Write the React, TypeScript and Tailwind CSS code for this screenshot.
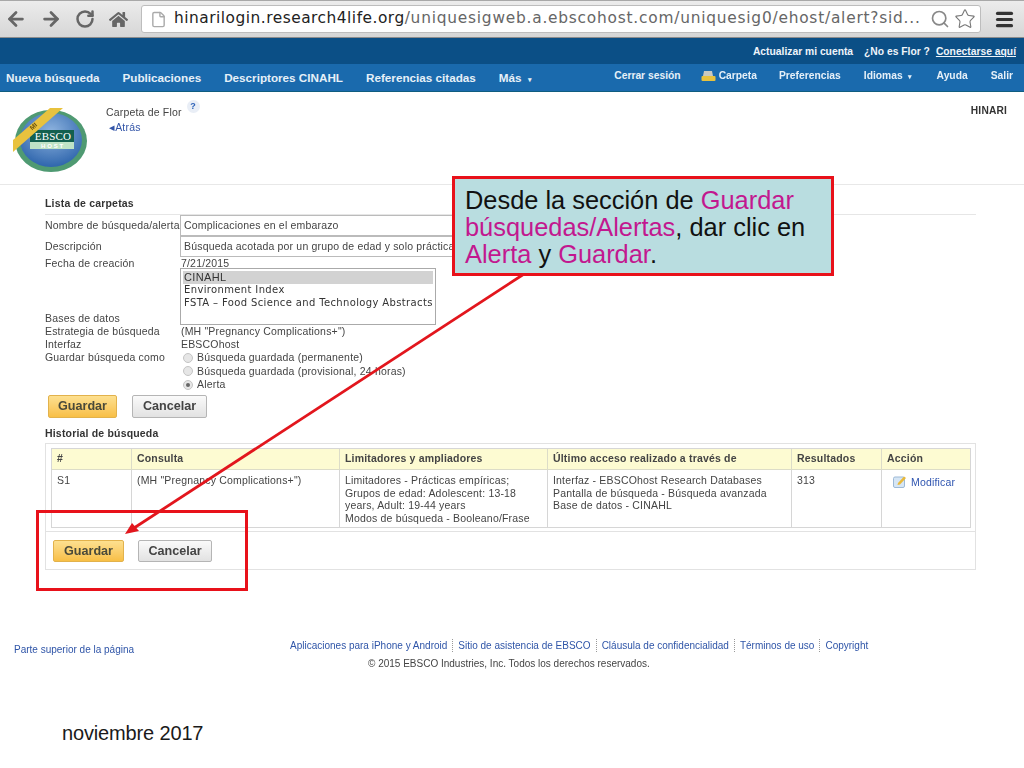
import React from 'react'
import { ArrowLeft, ArrowRight, RotateCw, File, Search, Star, Menu } from 'lucide-react'
import { FaHome } from 'react-icons/fa'

const Logo = () => (
  <svg width="78" height="68" viewBox="0 0 78 68" aria-hidden="true">
    <defs>
      <radialGradient id="lg" cx="50%" cy="35%" r="65%">
        <stop offset="0%" stopColor="#8fb4df" />
        <stop offset="100%" stopColor="#2f66ad" />
      </radialGradient>
    </defs>
    <ellipse cx="39" cy="35" rx="36" ry="31" fill="#4f9a72" />
    <ellipse cx="39" cy="34" rx="31" ry="27" fill="url(#lg)" />
    <rect x="18" y="24" width="44" height="12" fill="#13604f" />
    <rect x="18" y="36" width="44" height="7" fill="#bfe3c6" />
    <text x="41" y="34" textAnchor="middle" fontSize="11" fontFamily="'Liberation Serif', serif" fill="#fff">EBSCO</text>
    <text x="41" y="42" textAnchor="middle" fontSize="6" fontWeight="700" letterSpacing="1.8" fontFamily="'Liberation Sans', sans-serif" fill="#fff">HOST</text>
    <polygon points="1,34 1,46 51,2 38,2" fill="#e8c23e" />
    <text x="23" y="22" textAnchor="middle" fontSize="6.5" fontWeight="700" fontFamily="'Liberation Sans', sans-serif" fill="#6b5410" transform="rotate(-42 23 22)">MI</text>
  </svg>
)

const Radio = ({ on }: { on?: boolean }) => (
  <span className="ml-[2px] w-[10px] h-[10px] rounded-full border border-[#c4c4c4] bg-[#e6e6e6] flex items-center justify-center shrink-0">
    {on && <span className="w-[4px] h-[4px] rounded-full bg-[#666]" />}
  </span>
)

const FormRow = ({ label, className, children }: { label: string; className: string; children?: React.ReactNode }) => (
  <div className={`flex ${className}`}>
    <div className="w-[136px] shrink-0 leading-[13px]">{label}</div>
    {children}
  </div>
)

const Buttons = ({ className, saveClass, cancelClass }: { className: string; saveClass: string; cancelClass: string }) => (
  <div className={`flex font-bold text-[12.6px] tracking-normal ${className}`}>
    <button className={`rounded-[2px] border border-[#e2b24c] bg-gradient-to-b from-[#fde08f] to-[#f8bf45] text-[#4a4a3a] ${saveClass}`}>Guardar</button>
    <button className={`rounded-[2px] border border-[#b5b5b5] bg-gradient-to-b from-[#fafafa] to-[#e2e2e2] text-[#444] ${cancelClass}`}>Cancelar</button>
  </div>
)

const headerCell = 'bg-[#fdfbd2] font-bold flex items-center pl-[5px] border-b border-[#dcdcc8] h-[21px]'
const bodyCell = 'pl-[5px] pt-[4px] leading-[12.7px] border-[#d6d6d6]'

const footerLinks = ['Aplicaciones para iPhone y Android', 'Sitio de asistencia de EBSCO', 'Cláusula de confidencialidad', 'Términos de uso', 'Copyright']

const App: React.FC = () => {
  return (
    <div className="relative w-[1024px] h-[768px] overflow-hidden bg-white font-['Liberation_Sans',Arial,sans-serif] text-[10.5px] tracking-[0.18px] text-[#444]">
      <div className="blur-[0.35px]">
        {/* browser toolbar */}
        <div className="h-[38px] flex items-center bg-gradient-to-b from-[#ececec] to-[#d6d6d6] border-t border-b border-t-[#a8a8a8] border-b-[#8d8d8d]">
          <div className="w-[141px] flex items-center pl-[5px] gap-[13px] text-[#666]">
            <ArrowLeft size={22} strokeWidth={3} />
            <ArrowRight size={22} strokeWidth={3} />
            <RotateCw size={20} strokeWidth={3} />
            <FaHome size={19} className="ml-[1px]" />
          </div>
          <div className="w-[840px] h-[28px] flex items-center rounded-[3px] border border-[#bdbdbd] bg-white pl-[8px] pr-[4px] font-['DejaVu_Sans',sans-serif] text-[15.4px]">
            <File size={17} className="text-[#aaa] shrink-0" />
            <span className="ml-[7px] text-[#222] whitespace-nowrap tracking-[0.5px]">hinarilogin.research4life.org</span>
            <span className="text-[#666] whitespace-nowrap tracking-[0.77px]">/uniquesigweb.a.ebscohost.com/uniquesig0/ehost/alert?sid...</span>
            <Search size={20} className="ml-auto text-[#888] shrink-0" />
            <Star size={22} strokeWidth={1.2} className="ml-[4px] text-[#777] shrink-0" />
          </div>
          <Menu size={21} strokeWidth={3.6} className="ml-[13px] text-[#333]" />
        </div>

        {/* account bar */}
        <div className="h-[26px] bg-[#0b4f86] flex items-center justify-end gap-[11px] pr-[8px] pt-[2px] text-[#eef4fa] text-[10.3px] tracking-normal font-bold">
          <span>Actualizar mi cuenta</span>
          <span className="flex gap-[6px]">
            <span>¿No es Flor ?</span>
            <span className="underline">Conectarse aquí</span>
          </span>
        </div>

        {/* main nav */}
        <div className="h-[28px] bg-[#1a6aad] border-b border-[#0f5d80] flex items-center text-[#e6f0f8] text-[11.7px] tracking-normal font-bold">
          <div className="flex items-center gap-[23px] pl-[6px]">
            <span>Nueva búsqueda</span>
            <span>Publicaciones</span>
            <span>Descriptores CINAHL</span>
            <span>Referencias citadas</span>
            <span>Más <span className="ml-[3px] text-[7px]">▾</span></span>
          </div>
          <div className="ml-auto flex items-center gap-[23px] pr-[11px] pb-[3px] text-[10.3px]">
            <span className="-mr-[3px]">Cerrar sesión</span>
            <span className="flex items-center gap-[3px] -mr-[1px]">
              <svg width="15" height="12" viewBox="0 0 15 12" aria-hidden="true">
                <path d="M3 1h8l1 5H2z" fill="#c9c9c0" />
                <rect x="0.5" y="6" width="14" height="5" rx="1" fill="#e8c23e" />
              </svg>
              Carpeta
            </span>
            <span>Preferencias</span>
            <span className="mr-[2px]">Idiomas <span className="ml-[2px] text-[7px]">▾</span></span>
            <span>Ayuda</span>
            <span>Salir</span>
          </div>
        </div>

        {/* page title */}
        <div className="h-[93px] border-b border-[#e8e8e8] flex pl-[12px] pr-[17px]">
          <div className="mt-[14px]"><Logo /></div>
          <div className="ml-[16px] mt-[13px]">
            <div className="flex">
              <span>Carpeta de Flor</span>
              <span className="ml-[5px] -mt-[5px] w-[13px] h-[13px] rounded-full bg-[#e9eef6] text-[#2d62b8] font-bold text-[9px] flex items-center justify-center">?</span>
            </div>
            <div className="ml-[3px] -mt-[1px] text-[#3355a8]">◂Atrás</div>
          </div>
          <div className="ml-auto mt-[11px] font-bold text-[10.2px] text-[#333]">HINARI</div>
        </div>

        {/* carpetas form */}
        <div className="pl-[45px] pr-[48px]">
          <div className="mt-[12px] h-[18px] leading-[13px] font-bold text-[#333] border-b border-[#e6e6e6]">Lista de carpetas</div>
          <FormRow label="Nombre de búsqueda/alerta" className="h-[21px] items-center">
            <div className="w-[440px] h-[21px] -ml-[1px] border border-[#bbb] pl-[3px] flex items-center">Complicaciones en el embarazo</div>
          </FormRow>
          <FormRow label="Descripción" className="h-[21px] items-center">
            <div className="w-[440px] h-[21px] -ml-[1px] border border-[#bbb] pl-[3px] flex items-center whitespace-nowrap overflow-hidden">Búsqueda acotada por un grupo de edad y solo prácticas</div>
          </FormRow>
          <FormRow label="Fecha de creación" className="h-[11px] items-start">
            <span className="leading-[13px]">7/21/2015</span>
          </FormRow>
          <FormRow label="Bases de datos" className="h-[57px] items-end">
            <div className="w-[256px] h-[57px] -ml-[1px] border border-[#aaa] p-[2px] font-['DejaVu_Sans',sans-serif] text-[10px] tracking-[0.36px] leading-[12.8px] text-[#333]">
              <div className="bg-[#d2d2d2] pl-[1px] font-['Liberation_Sans',sans-serif] text-[11px]">CINAHL</div>
              <div className="pl-[1px]">Environment Index</div>
              <div className="pl-[1px] whitespace-nowrap">FSTA – Food Science and Technology Abstracts</div>
            </div>
          </FormRow>
          <FormRow label="Estrategia de búsqueda" className="h-[13px]"><span className="leading-[13px]">(MH "Pregnancy Complications+")</span></FormRow>
          <FormRow label="Interfaz" className="h-[13px]"><span className="leading-[13px]">EBSCOhost</span></FormRow>
          <FormRow label="Guardar búsqueda como" className="h-[40px]">
            <div className="flex flex-col gap-[0.5px] leading-[13px]">
              <div className="flex items-center gap-[4px] h-[13px]"><Radio />Búsqueda guardada (permanente)</div>
              <div className="flex items-center gap-[4px] h-[13px]"><Radio />Búsqueda guardada (provisional, 24 horas)</div>
              <div className="flex items-center gap-[4px] h-[13px]"><Radio on />Alerta</div>
            </div>
          </FormRow>
          <Buttons className="ml-[3px] mt-[4px] gap-[15px]" saveClass="w-[69px] h-[23px]" cancelClass="w-[75px] h-[23px]" />

          {/* historial */}
          <div className="mt-[8px] h-[16px] flex items-center font-bold text-[#333]">Historial de búsqueda</div>
          <div className="w-[931px] h-[127px] border border-[#e2e2e2] mt-[1px]">
            <div className="ml-[5px] mr-[4px] mt-[4px] border border-[#d6d6d6] grid grid-cols-[80px_208px_208px_244px_90px_1fr]">
              <div className={`${headerCell} border-r`}>#</div>
              <div className={`${headerCell} border-r`}>Consulta</div>
              <div className={`${headerCell} border-r`}>Limitadores y ampliadores</div>
              <div className={`${headerCell} border-r`}>Último acceso realizado a través de</div>
              <div className={`${headerCell} border-r`}>Resultados</div>
              <div className={headerCell}>Acción</div>
              <div className={`h-[57px] border-r ${bodyCell}`}>S1</div>
              <div className={`border-r ${bodyCell}`}>(MH "Pregnancy Complications+")</div>
              <div className={`border-r whitespace-nowrap ${bodyCell}`}>
                Limitadores - Prácticas empíricas;<br />Grupos de edad: Adolescent: 13-18<br />years, Adult: 19-44 years<br />Modos de búsqueda - Booleano/Frase
              </div>
              <div className={`border-r whitespace-nowrap ${bodyCell}`}>
                Interfaz - EBSCOhost Research Databases<br />Pantalla de búsqueda - Búsqueda avanzada<br />Base de datos - CINAHL
              </div>
              <div className={`border-r ${bodyCell}`}>313</div>
              <div className="pl-[11px] pt-[5px] flex items-start gap-[4px] text-[#2f55b0]">
                <svg width="14" height="13" viewBox="0 0 14 13" aria-hidden="true">
                  <rect x="0.5" y="2" width="11" height="10.5" rx="1.5" fill="#d6e6f5" stroke="#9db9d6" />
                  <path d="M5 8 L11 1.5 L13 3 L7 9.5 L4.5 10z" fill="#e9b93a" />
                </svg>
                <span className="leading-[14px]">Modificar</span>
              </div>
            </div>
            <div className="h-[4px] border-b border-[#e2e2e2]" />
            <Buttons className="ml-[7px] mt-[8px] gap-[14px]" saveClass="w-[71px] h-[22px]" cancelClass="w-[74px] h-[22px]" />
          </div>
        </div>

        {/* footer */}
        <div className="mt-[69px] flex text-[10px] tracking-normal text-[#2f55a8]">
          <span className="ml-[14px] mt-[4px] w-[276px] shrink-0 leading-[13px]">Parte superior de la página</span>
          <div>
            <div className="flex leading-[13px]">
              {footerLinks.map((l, i) => (
                <span key={l} className={i > 0 ? 'border-l border-dotted border-[#999] ml-[5px] pl-[5px]' : ''}>{l}</span>
              ))}
            </div>
            <div className="mt-[5px] ml-[78px] text-[#444] leading-[13px]">© 2015 EBSCO Industries, Inc. Todos los derechos reservados.</div>
          </div>
        </div>
      </div>
      <div className="mt-[51px] ml-[62px] text-[20px] tracking-[-0.15px] leading-[24px] text-[#1a1a1a]">noviembre 2017</div>

      {/* slide annotations over the screenshot */}
      <div className="absolute left-[36px] top-[510px] w-[212px] h-[81px] border-[3px] border-[#e8111a]" />
      <svg className="absolute left-0 top-0 pointer-events-none" width="1024" height="768" aria-hidden="true">
        <line x1="524" y1="274" x2="134" y2="528" stroke="#e2161d" strokeWidth="2.8" />
        <polygon points="125,534 132,523 139,531" fill="#e2161d" />
      </svg>
      <div className="absolute left-[452px] top-[176px] w-[382px] h-[100px] border-[3px] border-[#e8111a] bg-[#b9dde0] pl-[10px] pt-[8px] text-[25.4px] tracking-normal leading-[27px] text-[#111] whitespace-nowrap">
        <div>Desde la sección de <span className="text-[#c2188f]">Guardar</span></div>
        <div><span className="text-[#c2188f]">búsquedas/Alertas</span>, dar clic en</div>
        <div><span className="text-[#c2188f]">Alerta</span> y <span className="text-[#c2188f]">Guardar</span>.</div>
      </div>
    </div>
  )
}

export default App
